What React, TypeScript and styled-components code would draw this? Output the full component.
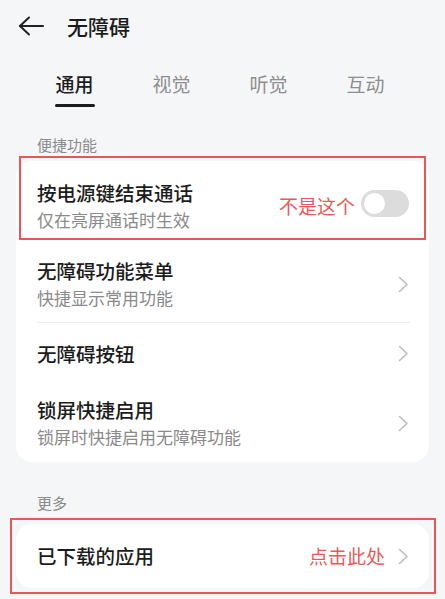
import styled, { createGlobalStyle } from "styled-components";

const GlobalStyle = createGlobalStyle`
  body {
    margin: 0;
    background: #f5f6f8;
    font-family: "Noto Sans CJK SC", "Noto Sans", sans-serif;
    color: #1c1c1c;
  }
`;

const Page = styled.div`
  width: 445px;
  height: 599px;
  overflow: hidden;
  background: #f5f6f8;
`;

const Header = styled.header`
  height: 52px;
  display: flex;
  align-items: center;
  padding-left: 18px;
  gap: 23px;
`;

const Title = styled.h1`
  margin: 0;
  font-size: 21px;
  font-weight: 500;
  line-height: 28px;
`;

const Tabs = styled.nav`
  display: flex;
  padding: 20px 0 0 26px;
  height: 60px;
  box-sizing: border-box;
`;

const Tab = styled.div<{ $active?: boolean }>`
  width: 97px;
  display: flex;
  flex-direction: column;
  align-items: center;
  font-size: 19px;
  line-height: 24px;
  font-weight: ${(p) => (p.$active ? 500 : 400)};
  color: ${(p) => (p.$active ? "#1c1c1c" : "#8e8e8e")};
  &::after {
    content: "";
    display: block;
    margin-top: 8px;
    width: 40px;
    height: 3px;
    border-radius: 2px;
    background: ${(p) => (p.$active ? "#1c1c1c" : "transparent")};
  }
`;

const SectionLabel = styled.div<{ $top: number; $bottom: number }>`
  padding-left: 37px;
  margin: ${(p) => p.$top}px 0 ${(p) => p.$bottom}px;
  font-size: 15px;
  line-height: 20px;
  color: #8a8a8a;
`;

const Card = styled.section<{ $padTop?: number }>`
  margin: 0 16px;
  background: #fff;
  border-radius: 16px;
  padding-top: ${(p) => p.$padTop ?? 0}px;
  position: relative;
`;

const Row = styled.div<{ $minHeight?: number; $divider?: boolean }>`
  position: relative;
  display: flex;
  align-items: center;
  padding: 13px 20px 13px 21px;
  min-height: ${(p) => p.$minHeight ?? 0}px;
  box-sizing: border-box;
  &::after {
    content: "";
    display: ${(p) => (p.$divider ? "block" : "none")};
    position: absolute;
    left: 21px;
    right: 19px;
    bottom: 0;
    height: 1px;
    background: #ececec;
  }
`;

const TextBlock = styled.div`
  flex: 1;
  display: flex;
  flex-direction: column;
  gap: 2px;
`;

const RowTitle = styled.div`
  font-size: 19.5px;
  line-height: 26px;
  font-weight: 500;
  color: #1c1c1c;
`;

const RowSub = styled.div`
  font-size: 17px;
  line-height: 24px;
  color: #8a8a8a;
`;

const Note = styled.span<{ $gap: number }>`
  font-size: 19px;
  line-height: 24px;
  color: #e85a5a;
  margin-right: ${(p) => p.$gap}px;
`;

const Toggle = styled.div`
  width: 48px;
  height: 27px;
  border-radius: 14px;
  background: #dcdcdc;
  position: relative;
  margin-top: -5px;
  &::before {
    content: "";
    position: absolute;
    left: 3px;
    top: 3px;
    width: 21px;
    height: 21px;
    border-radius: 50%;
    background: #fff;
  }
`;

const Highlight = styled.div<{ $t: number; $r: number; $b: number; $l: number }>`
  position: absolute;
  top: ${(p) => p.$t}px;
  right: ${(p) => p.$r}px;
  bottom: ${(p) => p.$b}px;
  left: ${(p) => p.$l}px;
  border: 2px solid #e85658;
  pointer-events: none;
`;

const Chevron = () => (
  <svg width="11" height="17" viewBox="0 0 11 17" fill="none">
    <polyline points="1.5,1.5 9,8.5 1.5,15.5" stroke="#bdbdbd" strokeWidth="1.6" strokeLinecap="round" strokeLinejoin="round" />
  </svg>
);

const BackArrow = () => (
  <svg width="26" height="20" viewBox="0 0 26 20" fill="none">
    <line x1="2" y1="10" x2="25" y2="10" stroke="#222" strokeWidth="2" strokeLinecap="round" />
    <polyline points="11,1.5 2,10 11,18.5" stroke="#222" strokeWidth="2" strokeLinecap="round" strokeLinejoin="round" />
  </svg>
);

export default function App() {
  return (
    <Page>
      <GlobalStyle />
      <Header>
        <BackArrow />
        <Title>无障碍</Title>
      </Header>
      <Tabs>
        <Tab $active>通用</Tab>
        <Tab>视觉</Tab>
        <Tab>听觉</Tab>
        <Tab>互动</Tab>
      </Tabs>

      <SectionLabel $top={23} $bottom={6}>便捷功能</SectionLabel>
      <Card $padTop={6}>
        <Row>
          <TextBlock>
            <RowTitle>按电源键结束通话</RowTitle>
            <RowSub>仅在亮屏通话时生效</RowSub>
          </TextBlock>
          <Note $gap={6}>不是这个</Note>
          <Toggle />
          <Highlight $t={-11} $r={3} $b={5} $l={3} />
        </Row>
        <Row $divider>
          <TextBlock>
            <RowTitle>无障碍功能菜单</RowTitle>
            <RowSub>快捷显示常用功能</RowSub>
          </TextBlock>
          <Chevron />
        </Row>
        <Row $minHeight={61}>
          <TextBlock>
            <RowTitle>无障碍按钮</RowTitle>
          </TextBlock>
          <Chevron />
        </Row>
        <Row>
          <TextBlock>
            <RowTitle>锁屏快捷启用</RowTitle>
            <RowSub>锁屏时快捷启用无障碍功能</RowSub>
          </TextBlock>
          <Chevron />
        </Row>
      </Card>

      <SectionLabel $top={31} $bottom={11}>更多</SectionLabel>
      <Card>
        <Row $minHeight={64}>
          <TextBlock>
            <RowTitle>已下载的应用</RowTitle>
          </TextBlock>
          <Note $gap={13}>点击此处</Note>
          <Chevron />
        </Row>
        <Highlight $t={-6} $r={-7} $b={-6} $l={-6} />
      </Card>
    </Page>
  );
}
